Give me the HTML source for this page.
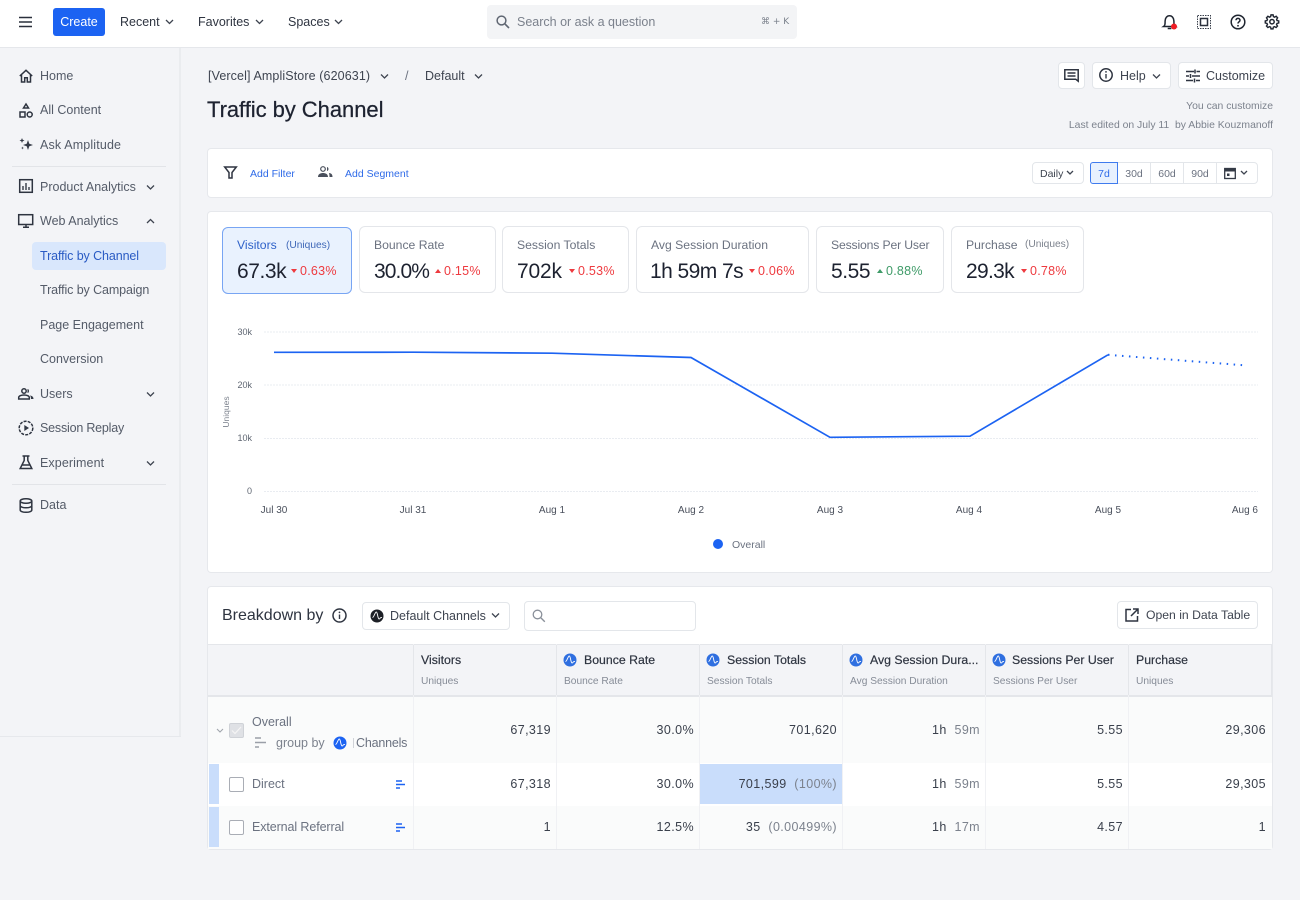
<!DOCTYPE html>
<html><head><meta charset="utf-8"><title>Traffic by Channel</title>
<style>
*{box-sizing:border-box}
html,body{margin:0;padding:0}
body{width:1300px;height:900px;position:relative;overflow:hidden;background:#f3f4f7;font-family:"Liberation Sans",sans-serif;color:#3e4450;font-size:12.5px}
.a,.t{position:absolute}
.t{white-space:nowrap;line-height:16px}
.r{text-align:right}
.c{text-align:center}
.card{position:absolute;background:#fff;border:1px solid #e6e8ec;border-radius:4px}
.btn{position:absolute;background:#fff;border:1px solid #e3e6ea;border-radius:4px}
svg{position:absolute;overflow:visible}
.ic{fill:none;stroke:#2e3440;stroke-width:1.5}
.ch{fill:none;stroke:#3e4450;stroke-width:1.3}
.nav{color:#545b68;font-size:12.5px}
.kt{color:#6b7280;font-size:12.2px}
.kv{color:#1d2230;font-size:21px;line-height:26px;letter-spacing:-.45px;margin-top:1px}
.kd{font-size:12.5px;letter-spacing:.25px}
.red{color:#ee3a3f}.grn{color:#3f9b68}
.th{font-weight:400;color:#2e3440;font-size:12.3px;-webkit-text-stroke:.2px #2e3440}
.sub{color:#868c97;font-size:10.2px;margin-top:1px}
.n{color:#3a404c;font-size:12.5px;text-align:right;letter-spacing:.4px}
.g{color:#7c828d}
</style></head><body>

<div class="a" style="left:0;top:0;width:1300px;height:48px;background:#fff;border-bottom:1px solid #e5e7eb"></div>
<svg style="left:18px;top:15px" width="15" height="14"><path d="M1 2.500h13M1 7h13M1 11.500h13" stroke="#2a303c" stroke-width="1.500" fill="none"/></svg>
<div class="a" style="left:53px;top:8px;width:52px;height:28px;background:#1c63f2;border-radius:3px"></div>
<div class="t c" style="left:53px;top:14px;width:52px;color:#fff;font-size:12.5px">Create</div>
<div class="t" style="left:120px;top:14px;color:#2f3541">Recent</div>
<svg style="left:164px;top:18px" width="10" height="7"><path class="ch" d="M2 2l3.500 3.500L9 2"/></svg>
<div class="t" style="left:198px;top:14px;color:#2f3541">Favorites</div>
<svg style="left:254px;top:18px" width="10" height="7"><path class="ch" d="M2 2l3.500 3.500L9 2"/></svg>
<div class="t" style="left:288px;top:14px;color:#2f3541">Spaces</div>
<svg style="left:333px;top:18px" width="10" height="7"><path class="ch" d="M2 2l3.500 3.500L9 2"/></svg>
<div class="a" style="left:487px;top:5px;width:310px;height:34px;background:#f3f4f6;border-radius:4px"></div>
<svg style="left:496px;top:15px" width="14" height="14"><circle cx="5.500" cy="5.500" r="4.400" fill="none" stroke="#5f6672" stroke-width="1.500"/><path d="M9 9l4 4" stroke="#5f6672" stroke-width="1.600"/></svg>
<div class="t" style="left:517px;top:14px;color:#7b818c">Search or ask a question</div>
<div class="t" style="left:761px;top:14px;color:#7b818c;font-size:9px;font-family:'DejaVu Sans',sans-serif">⌘ + K</div>

<svg style="left:1163px;top:15px" width="16" height="16"><path d="M.6 11.500c1.500-1 1.500-2.500 1.500-5.500C2.100 3 4 .8 6.500.8S10.900 3 10.900 6c0 3 0 4.500 1.500 5.500z M4.700 13.500h3.600" class="ic" style="stroke:#1f2530"/><circle cx="11" cy="11.500" r="3" fill="#ee1c25"/></svg>
<svg style="left:1197px;top:15px" width="14" height="14"><rect x=".5" y=".5" width="13" height="13" fill="none" stroke="#3a404c" stroke-dasharray="1.500 1"/><rect x="3.500" y="3.500" width="7" height="7" fill="none" stroke="#2a303c" stroke-width="1.500"/></svg>
<svg style="left:1230px;top:14px" width="16" height="16"><circle cx="8" cy="8" r="6.800" class="ic" style="stroke:#1f2530"/><path d="M6 6.200C6 3.800 10 3.800 10 6.200c0 1.600-2 1.600-2 3.300" class="ic" style="stroke:#1f2530"/><circle cx="8" cy="11.800" r=".9" fill="#1f2530"/></svg>
<svg style="left:1265px;top:14px" width="15" height="15"><path d="M6.800 1h2.400l.4 2 1.300.6 1.800-1 1.600 1.800-1.100 1.700.4 1.300 2 .5v2.300l-2 .5-.5 1.300 1.100 1.700-1.600 1.700-1.800-1-1.300.5-.4 2H6.800l-.4-2-1.300-.5-1.800 1-1.600-1.700 1.100-1.700-.5-1.300-2-.5V7.900l2-.5.5-1.300L1.700 4.400l1.600-1.800 1.800 1 1.300-.6z" transform="scale(.88)" class="ic" style="stroke:#1f2530;stroke-width:1.600"/><circle cx="7" cy="7.700" r="2.200" class="ic" style="stroke:#1f2530"/></svg>

<!-- sidebar -->
<div class="a" style="left:179px;top:48px;width:2px;height:689px;background:#eaecef"></div>
<div class="a" style="left:0;top:736px;width:181px;height:1px;background:#e6e8ec"></div>
<div class="a" style="left:12px;top:166px;width:154px;height:1px;background:#e2e4e8"></div>
<div class="a" style="left:12px;top:484px;width:154px;height:1px;background:#e2e4e8"></div>
<div class="a" style="left:32px;top:242px;width:134px;height:28px;background:#d9e7fc;border-radius:4px"></div>

<svg style="left:19px;top:69px" width="14" height="14"><path class="ic" d="M.8 7L7 1.300 13.200 7M2.500 5.500v7.500h3.200V8.800h2.600V13h3.200V5.500"/></svg>
<div class="t nav" style="left:40px;top:68px">Home</div>
<svg style="left:19px;top:103px" width="14" height="15"><path class="ic" d="M7 1l2.500 4h-5z"/><rect class="ic" x="1" y="9" width="5" height="5"/><circle class="ic" cx="10.700" cy="11.500" r="2.500"/></svg>
<div class="t nav" style="left:40px;top:102px">All Content</div>
<svg style="left:19px;top:137px" width="14" height="14"><path fill="#343a46" d="M9 3l1.300 3.700L14 8l-3.700 1.300L9 13 7.700 9.300 4 8l3.700-1.300zM3 1l.7 1.800L5.500 3.500l-1.800.7L3 6l-.7-1.800L.5 3.500l1.800-.7zM3.500 9.500l.4 1.100 1.100.4-1.100.4-.4 1.100-.4-1.100L2 11l1.100-.4z"/></svg>
<div class="t nav" style="left:40px;top:137px;letter-spacing:.15px">Ask Amplitude</div>
<svg style="left:19px;top:179px" width="14" height="14"><rect class="ic" x=".7" y=".7" width="12.600" height="12.600"/><path d="M4 11V7M7 11V4M10 11V8" stroke="#343a46" stroke-width="1.400"/></svg>
<div class="t nav" style="left:40px;top:179px">Product Analytics</div>
<svg style="left:145px;top:184px" width="10" height="7"><path class="ch" d="M2 1.500l3.500 3.500L9 1.500"/></svg>
<svg style="left:18px;top:214px" width="16" height="14"><rect class="ic" x=".7" y=".7" width="14" height="9.800"/><path d="M8 10.500V13M5 13.300h6" class="ic"/></svg>
<div class="t nav" style="left:40px;top:213px">Web Analytics</div>
<svg style="left:145px;top:218px" width="10" height="7"><path class="ch" d="M2 5l3.500-3.500L9 5"/></svg>
<div class="t" style="left:40px;top:248px;color:#2a5bc4;letter-spacing:-.1px">Traffic by Channel</div>
<div class="t nav" style="left:40px;top:282px;letter-spacing:-.1px">Traffic by Campaign</div>
<div class="t nav" style="left:40px;top:317px">Page Engagement</div>
<div class="t nav" style="left:40px;top:351px">Conversion</div>
<svg style="left:18px;top:388px" width="16" height="12"><circle class="ic" cx="6" cy="3" r="2.200"/><path class="ic" d="M.7 11V9.500C.7 8 3 7 6 7s5.300 1 5.300 2.500V11z"/><path fill="#343a46" d="M9.500 1c2 0 2 4 0 4zM12 7.500c2 .3 3.500 1.200 3.500 3.500H13c0-1.500-.3-2.600-1-3.500z"/></svg>
<div class="t nav" style="left:40px;top:386px">Users</div>
<svg style="left:145px;top:391px" width="10" height="7"><path class="ch" d="M2 1.500l3.500 3.500L9 1.500"/></svg>
<svg style="left:18px;top:420px" width="16" height="16"><circle class="ic" cx="8" cy="8" r="6.800" stroke-dasharray="3 1.200"/><path d="M6.300 5v6L11 8z" fill="#343a46"/></svg>
<div class="t nav" style="left:40px;top:420px;letter-spacing:-.2px">Session Replay</div>
<svg style="left:19px;top:455px" width="14" height="15"><path class="ic" d="M3.500 1h7M5.200 1v4.500L1.200 13.500h11.600l-4-8V1M3.500 10h7"/></svg>
<div class="t nav" style="left:40px;top:455px;letter-spacing:.1px">Experiment</div>
<svg style="left:145px;top:460px" width="10" height="7"><path class="ch" d="M2 1.500l3.500 3.500L9 1.500"/></svg>
<svg style="left:19px;top:498px" width="14" height="15"><ellipse class="ic" cx="7" cy="3" rx="5.800" ry="2.300"/><path class="ic" d="M1.200 3v9c0 1.300 2.600 2.300 5.800 2.300s5.800-1 5.800-2.300V3M1.200 7.500c0 1.300 2.600 2.300 5.800 2.300s5.800-1 5.800-2.300"/></svg>
<div class="t nav" style="left:40px;top:497px">Data</div>

<!-- header -->
<div class="t" style="left:208px;top:68px;color:#3e4450;letter-spacing:.11px">[Vercel] AmpliStore (620631)</div>
<svg style="left:379px;top:73px" width="10" height="7"><path class="ch" d="M2 1.500l3.500 3.500L9 1.500"/></svg>
<div class="t" style="left:405px;top:68px;color:#6b7280">/</div>
<div class="t" style="left:425px;top:68px;color:#3e4450">Default</div>
<svg style="left:473px;top:73px" width="10" height="7"><path class="ch" d="M2 1.500l3.500 3.500L9 1.500"/></svg>
<div class="t" style="left:207px;top:97px;font-size:22px;line-height:26px;color:#1d2230;-webkit-text-stroke:.25px #1d2230;letter-spacing:-.05px">Traffic by Channel</div>

<div class="btn" style="left:1058px;top:62px;width:27px;height:27px"></div>
<svg style="left:1064px;top:69px" width="15" height="14"><path class="ic" d="M.8.800h13.400v11.400l-2.500-2H.8zM3.500 4h8M3.500 7h8"/></svg>
<div class="btn" style="left:1092px;top:62px;width:79px;height:27px"></div>
<svg style="left:1099px;top:68px" width="14" height="14"><circle class="ic" cx="7" cy="7" r="6.200"/><path d="M7 6v4.500" stroke="#343a46" stroke-width="1.400"/><circle cx="7" cy="3.900" r=".9" fill="#343a46"/></svg>
<div class="t" style="left:1120px;top:68px;color:#3e4450">Help</div>
<svg style="left:1151px;top:73px" width="10" height="7"><path class="ch" d="M2 1.500l3.500 3.500L9 1.500"/></svg>
<div class="btn" style="left:1178px;top:62px;width:95px;height:27px"></div>
<svg style="left:1186px;top:69px" width="14" height="14"><path class="ic" d="M0 2.500h8M10.500 2.500H14M0 7h3M6 7h8M0 11.500h7M10 11.500h4M9 .5v4M4.500 5v4M8.500 9.500v4"/></svg>
<div class="t" style="left:1206px;top:68px;color:#3e4450">Customize</div>
<div class="t r" style="right:27px;top:99px;color:#7c828d;font-size:10.4px">You can customize</div>
<div class="t r" style="right:27px;top:118px;color:#7c828d;font-size:10.4px">Last edited on July 11&nbsp; by Abbie Kouzmanoff</div>

<!-- filter bar -->
<div class="card" style="left:207px;top:148px;width:1066px;height:50px"></div>
<svg style="left:224px;top:166px" width="13" height="13"><path class="ic" d="M.7 1h11.600L8 6.500V12H5V6.500z"/></svg>
<div class="t" style="left:250px;top:166px;color:#2f6be8;font-size:10.5px">Add Filter</div>
<svg style="left:318px;top:166px" width="15" height="13"><circle cx="5" cy="3" r="2.300" fill="none" stroke="#4a505c" stroke-width="1.200"/><path fill="#4a505c" d="M0 11c0-3 2.500-4 5-4s5 1 5 4zM9 1c2 .3 2 3.700 0 4zM11 7c2.500.3 3.500 1.500 3.500 4H11.500c0-1.500-.2-3-.5-4z"/></svg>
<div class="t" style="left:345px;top:166px;color:#2f6be8;font-size:10.5px">Add Segment</div>

<div class="btn" style="left:1032px;top:162px;width:52px;height:22px"></div>
<div class="t" style="left:1040px;top:166px;font-size:10.5px;color:#3e4450">Daily</div>
<svg style="left:1066px;top:170px" width="8" height="6"><path class="ch" d="M1 1l3 3 3-3"/></svg>
<div class="btn" style="left:1090px;top:162px;width:168px;height:22px"></div>
<div class="a" style="left:1090px;top:162px;width:28px;height:22px;background:#e8f1fe;border:1px solid #3f7bee;border-radius:3px 0 0 3px"></div>
<div class="a" style="left:1150px;top:163px;width:1px;height:20px;background:#e3e6ea"></div>
<div class="a" style="left:1183px;top:163px;width:1px;height:20px;background:#e3e6ea"></div>
<div class="a" style="left:1216px;top:163px;width:1px;height:20px;background:#e3e6ea"></div>
<div class="t c" style="left:1090px;top:165px;width:28px;font-size:10.5px;color:#2f6be8;margin-top:1px">7d</div>
<div class="t c" style="left:1118px;top:165px;width:32px;font-size:10.5px;color:#6b7280;margin-top:1px">30d</div>
<div class="t c" style="left:1151px;top:165px;width:32px;font-size:10.5px;color:#6b7280;margin-top:1px">60d</div>
<div class="t c" style="left:1184px;top:165px;width:32px;font-size:10.5px;color:#6b7280;margin-top:1px">90d</div>
<svg style="left:1224px;top:167px" width="12" height="12"><rect x=".7" y="1.500" width="10.600" height="10" fill="none" stroke="#343a46" stroke-width="1.300"/><rect x=".7" y="1.500" width="10.600" height="3" fill="#343a46"/><rect x="3" y="6.500" width="2.500" height="2.500" fill="#343a46"/></svg>
<svg style="left:1240px;top:170px" width="8" height="6"><path class="ch" d="M1 1l3 3 3-3"/></svg>

<!-- chart card -->
<div class="card" style="left:207px;top:211px;width:1066px;height:362px"></div>
<div class="a" style="left:222px;top:227px;width:130px;height:67px;background:#e9f2fe;border:1px solid #78a5f3;border-radius:6px"></div>
<div class="t" style="left:237px;top:237px;color:#2f62c9;font-size:12.2px">Visitors</div>
<div class="t" style="left:286px;top:238px;color:#3f68b8;font-size:10.2px">(Uniques)</div>
<div class="t kv" style="left:237px;top:258px">67.3k</div>
<svg style="left:291px;top:269px" width="6" height="4"><path d="M0 0h6L3 4z" fill="#ee3a3f"/></svg>
<div class="t kd red" style="left:300px;top:263px">0.63%</div>

<div class="a" style="left:359px;top:226px;width:137px;height:67px;background:#fff;border:1px solid #e4e6ea;border-radius:6px"></div>
<div class="t kt" style="left:374px;top:237px">Bounce Rate</div>
<div class="t kv" style="left:374px;top:258px;letter-spacing:-.9px">30.0%</div>
<svg style="left:435px;top:269px" width="6" height="4"><path d="M0 4h6L3 0z" fill="#ee3a3f"/></svg>
<div class="t kd red" style="left:444px;top:263px">0.15%</div>

<div class="a" style="left:502px;top:226px;width:127px;height:67px;background:#fff;border:1px solid #e4e6ea;border-radius:6px"></div>
<div class="t kt" style="left:517px;top:237px">Session Totals</div>
<div class="t kv" style="left:517px;top:258px;letter-spacing:-.2px">702k</div>
<svg style="left:569px;top:269px" width="6" height="4"><path d="M0 0h6L3 4z" fill="#ee3a3f"/></svg>
<div class="t kd red" style="left:578px;top:263px">0.53%</div>

<div class="a" style="left:636px;top:226px;width:173px;height:67px;background:#fff;border:1px solid #e4e6ea;border-radius:6px"></div>
<div class="t kt" style="left:651px;top:237px">Avg Session Duration</div>
<div class="t kv" style="left:650px;top:258px;letter-spacing:-.55px">1h 59m 7s</div>
<svg style="left:749px;top:269px" width="6" height="4"><path d="M0 0h6L3 4z" fill="#ee3a3f"/></svg>
<div class="t kd red" style="left:758px;top:263px">0.06%</div>

<div class="a" style="left:816px;top:226px;width:128px;height:67px;background:#fff;border:1px solid #e4e6ea;border-radius:6px"></div>
<div class="t kt" style="left:831px;top:237px;letter-spacing:-.15px">Sessions Per User</div>
<div class="t kv" style="left:831px;top:258px">5.55</div>
<svg style="left:877px;top:269px" width="6" height="4"><path d="M0 4h6L3 0z" fill="#3f9b68"/></svg>
<div class="t kd grn" style="left:886px;top:263px">0.88%</div>

<div class="a" style="left:951px;top:226px;width:133px;height:67px;background:#fff;border:1px solid #e4e6ea;border-radius:6px"></div>
<div class="t kt" style="left:966px;top:237px">Purchase</div>
<div class="t" style="left:1025px;top:237px;color:#7c828d;font-size:10.2px">(Uniques)</div>
<div class="t kv" style="left:966px;top:258px;letter-spacing:-.7px">29.3k</div>
<svg style="left:1021px;top:269px" width="6" height="4"><path d="M0 0h6L3 4z" fill="#ee3a3f"/></svg>
<div class="t kd red" style="left:1030px;top:263px">0.78%</div>

<svg style="left:0;top:0" width="1300" height="900">
<g stroke="#e9ecf1" stroke-width="1" stroke-dasharray="2 1"><path d="M264 332H1258M264 385H1258M264 438.500H1258M264 491.500H1258"/></g>
<polyline fill="none" stroke="#1c63f2" stroke-width="1.700" points="274,352.300 413,352.200 552,353.200 691,357.500 830,437.300 970,436.200 1108,354.800"/>
<polyline fill="none" stroke="#1c63f2" stroke-width="2" stroke-dasharray="1.500 5.500" points="1108,354.800 1247,365.500"/>
<circle cx="718" cy="544" r="5" fill="#1c63f2"/>
</svg>
<div class="t r" style="left:222px;top:324px;width:30px;font-size:9px;color:#5f6672">30k</div>
<div class="t r" style="left:222px;top:377px;width:30px;font-size:9px;color:#5f6672">20k</div>
<div class="t r" style="left:222px;top:430px;width:30px;font-size:9px;color:#5f6672">10k</div>
<div class="t r" style="left:222px;top:483px;width:30px;font-size:9px;color:#5f6672">0</div>
<div class="t" style="left:226px;top:412px;font-size:8.5px;color:#7c828d;transform:translate(-50%,-50%) rotate(-90deg)">Uniques</div>
<div class="t c" style="left:244px;top:503px;width:60px;font-size:10px;color:#4a505c">Jul 30</div>
<div class="t c" style="left:383px;top:503px;width:60px;font-size:10px;color:#4a505c">Jul 31</div>
<div class="t c" style="left:522px;top:503px;width:60px;font-size:10px;color:#4a505c">Aug 1</div>
<div class="t c" style="left:661px;top:503px;width:60px;font-size:10px;color:#4a505c">Aug 2</div>
<div class="t c" style="left:800px;top:503px;width:60px;font-size:10px;color:#4a505c">Aug 3</div>
<div class="t c" style="left:939px;top:503px;width:60px;font-size:10px;color:#4a505c">Aug 4</div>
<div class="t c" style="left:1078px;top:503px;width:60px;font-size:10px;color:#4a505c">Aug 5</div>
<div class="t r" style="left:1198px;top:503px;width:60px;font-size:10px;color:#4a505c">Aug 6</div>
<div class="t" style="left:732px;top:537px;font-size:10.5px;color:#6b7280">Overall</div>

<!-- breakdown card -->
<div class="card" style="left:207px;top:586px;width:1066px;height:264px"></div>
<div class="t" style="left:222px;top:606px;font-size:16px;line-height:20px;color:#2e3440">Breakdown by</div>
<svg style="left:332px;top:608px" width="15" height="15"><circle class="ic" cx="7.500" cy="7.500" r="6.500"/><path d="M7.500 6.500v4.500" stroke="#343a46" stroke-width="1.400"/><circle cx="7.500" cy="4.400" r=".9" fill="#343a46"/></svg>
<div class="btn" style="left:362px;top:602px;width:148px;height:28px"></div>
<svg style="left:370px;top:609px" width="14" height="14"><circle cx="7" cy="7" r="6.500" fill="#1d2026"/><path d="M2.500 8.500C4 8.500 5 3 6.300 3S7.500 9 9 10c1 .3 1-2 3-1.500" fill="none" stroke="#fff" stroke-width=".9"/></svg>
<div class="t" style="left:390px;top:608px;color:#3e4450">Default Channels</div>
<svg style="left:490px;top:612px" width="10" height="7"><path class="ch" d="M2 1.500l3.500 3.500L9 1.500"/></svg>
<div class="btn" style="left:524px;top:601px;width:172px;height:30px"></div>
<svg style="left:532px;top:609px" width="14" height="14"><circle cx="5.500" cy="5.500" r="4.300" fill="none" stroke="#8a909a" stroke-width="1.300"/><path d="M8.800 8.800l4 4" stroke="#8a909a" stroke-width="1.400"/></svg>
<div class="btn" style="left:1117px;top:601px;width:141px;height:28px"></div>
<svg style="left:1125px;top:608px" width="14" height="14"><path class="ic" d="M6 1.500H1v11.500h11.500V8M8 1h5v5M13 1L6 8"/></svg>
<div class="t" style="left:1146px;top:607px;color:#3e4450;font-size:12.2px">Open in Data Table</div>

<!-- table -->
<div class="a" style="left:208px;top:644px;width:1064px;height:53px;background:#f3f4f7;border-top:1px solid #e4e6ea;border-bottom:2px solid #e4e6ea"></div>
<div class="a" style="left:208px;top:697px;width:1064px;height:66px;background:#fafbfb"></div>
<div class="a" style="left:208px;top:763px;width:1064px;height:43px;background:#fff"></div>
<div class="a" style="left:208px;top:806px;width:1064px;height:43px;background:#fafbfb"></div>
<div class="a" style="left:209px;top:764px;width:10px;height:40px;background:#c9ddfb"></div>
<div class="a" style="left:209px;top:807px;width:10px;height:40px;background:#c9ddfb"></div>
<div class="a" style="left:700px;top:764px;width:142px;height:40px;background:#c9ddfb"></div>

<div class="a" style="left:413px;top:644px;width:1px;height:205px;background:#f0f1f4"></div>
<div class="a" style="left:556px;top:644px;width:1px;height:205px;background:#f0f1f4"></div>
<div class="a" style="left:699px;top:644px;width:1px;height:205px;background:#f0f1f4"></div>
<div class="a" style="left:842px;top:644px;width:1px;height:205px;background:#f0f1f4"></div>
<div class="a" style="left:985px;top:644px;width:1px;height:205px;background:#f0f1f4"></div>
<div class="a" style="left:1128px;top:644px;width:1px;height:205px;background:#f0f1f4"></div>
<div class="a" style="left:413px;top:645px;width:1px;height:50px;background:#e4e6ea"></div>
<div class="a" style="left:556px;top:645px;width:1px;height:50px;background:#e4e6ea"></div>
<div class="a" style="left:699px;top:645px;width:1px;height:50px;background:#e4e6ea"></div>
<div class="a" style="left:842px;top:645px;width:1px;height:50px;background:#e4e6ea"></div>
<div class="a" style="left:985px;top:645px;width:1px;height:50px;background:#e4e6ea"></div>
<div class="a" style="left:1128px;top:645px;width:1px;height:50px;background:#e4e6ea"></div>
<div class="a" style="left:1271px;top:644px;width:1px;height:53px;background:#e4e6ea"></div>

<div class="t th" style="left:421px;top:652px">Visitors</div>
<div class="t sub" style="left:421px;top:673px">Uniques</div>
<svg style="left:563px;top:653px" width="14" height="14"><circle cx="7" cy="7" r="6.500" fill="#2f6fe0"/><path d="M2.500 8.500C4 8.500 5 3 6.300 3S7.500 9 9 10c1 .3 1-2 3-1.500" fill="none" stroke="#fff" stroke-width=".9"/></svg>
<div class="t th" style="left:584px;top:652px">Bounce Rate</div>
<div class="t sub" style="left:564px;top:673px">Bounce Rate</div>
<svg style="left:706px;top:653px" width="14" height="14"><circle cx="7" cy="7" r="6.500" fill="#2f6fe0"/><path d="M2.500 8.500C4 8.500 5 3 6.300 3S7.500 9 9 10c1 .3 1-2 3-1.500" fill="none" stroke="#fff" stroke-width=".9"/></svg>
<div class="t th" style="left:727px;top:652px">Session Totals</div>
<div class="t sub" style="left:707px;top:673px">Session Totals</div>
<svg style="left:849px;top:653px" width="14" height="14"><circle cx="7" cy="7" r="6.500" fill="#2f6fe0"/><path d="M2.500 8.500C4 8.500 5 3 6.300 3S7.500 9 9 10c1 .3 1-2 3-1.500" fill="none" stroke="#fff" stroke-width=".9"/></svg>
<div class="t th" style="left:870px;top:652px">Avg Session Dura...</div>
<div class="t sub" style="left:850px;top:673px">Avg Session Duration</div>
<svg style="left:992px;top:653px" width="14" height="14"><circle cx="7" cy="7" r="6.500" fill="#2f6fe0"/><path d="M2.500 8.500C4 8.500 5 3 6.300 3S7.500 9 9 10c1 .3 1-2 3-1.500" fill="none" stroke="#fff" stroke-width=".9"/></svg>
<div class="t th" style="left:1012px;top:652px">Sessions Per User</div>
<div class="t sub" style="left:993px;top:673px">Sessions Per User</div>
<div class="t th" style="left:1136px;top:652px">Purchase</div>
<div class="t sub" style="left:1136px;top:673px">Uniques</div>

<!-- row labels -->
<svg style="left:216px;top:728px" width="8" height="6"><path d="M1 1l3 3 3-3" fill="none" stroke="#a0a5ad" stroke-width="1.100"/></svg>
<div class="a" style="left:229px;top:723px;width:15px;height:15px;background:#dfe1e5;border:1px solid #cfd2d7;border-radius:2px"></div>
<svg style="left:231px;top:726px" width="11" height="9"><path d="M1 4.500l3 3 6-6.500" fill="none" stroke="#f5f5f5" stroke-width="1.200"/></svg>
<div class="t" style="left:252px;top:714px;color:#6b7280">Overall</div>
<svg style="left:255px;top:737px" width="12" height="12"><path d="M0 1h6M0 5.500h11M0 10h4" stroke="#9a9fa8" stroke-width="1.600" fill="none"/></svg>
<div class="t" style="left:276px;top:735px;color:#7c828d">group by</div>
<svg style="left:333px;top:736px" width="14" height="14"><circle cx="7" cy="7" r="6.500" fill="#1c63f2"/><path d="M2.500 8.500C4 8.500 5 3 6.300 3S7.500 9 9 10c1 .3 1-2 3-1.500" fill="none" stroke="#fff" stroke-width=".9"/></svg>
<div class="a" style="left:353px;top:738px;width:1px;height:10px;background:#d0d3d8"></div>
<div class="t" style="left:356px;top:735px;color:#6b7280;letter-spacing:-.2px">Channels</div>

<div class="a" style="left:229px;top:777px;width:15px;height:15px;background:#fff;border:1px solid #a9adb5;border-radius:2px"></div>
<div class="t" style="left:252px;top:776px;color:#6b7280">Direct</div>
<svg style="left:396px;top:780px" width="10" height="9"><path d="M0 1h6M0 4.500h9M0 8h4" stroke="#1c63f2" stroke-width="1.500" fill="none"/></svg>
<div class="a" style="left:229px;top:820px;width:15px;height:15px;background:#fff;border:1px solid #a9adb5;border-radius:2px"></div>
<div class="t" style="left:252px;top:819px;color:#6b7280;letter-spacing:-.1px">External Referral</div>
<svg style="left:396px;top:823px" width="10" height="9"><path d="M0 1h6M0 4.500h9M0 8h4" stroke="#1c63f2" stroke-width="1.500" fill="none"/></svg>

<!-- data rows -->
<div class="t n" style="left:414px;top:722px;width:137px">67,319</div>
<div class="t n" style="left:557px;top:722px;width:137px">30.0%</div>
<div class="t n" style="left:700px;top:722px;width:137px">701,620</div>
<div class="t n" style="left:843px;top:722px;width:137px">1h &nbsp;<span class="g">59m</span></div>
<div class="t n" style="left:986px;top:722px;width:137px">5.55</div>
<div class="t n" style="left:1129px;top:722px;width:137px">29,306</div>

<div class="t n" style="left:414px;top:776px;width:137px">67,318</div>
<div class="t n" style="left:557px;top:776px;width:137px">30.0%</div>
<div class="t n" style="left:700px;top:776px;width:137px">701,599 &nbsp;<span class="g">(100%)</span></div>
<div class="t n" style="left:843px;top:776px;width:137px">1h &nbsp;<span class="g">59m</span></div>
<div class="t n" style="left:986px;top:776px;width:137px">5.55</div>
<div class="t n" style="left:1129px;top:776px;width:137px">29,305</div>

<div class="t n" style="left:414px;top:819px;width:137px">1</div>
<div class="t n" style="left:557px;top:819px;width:137px">12.5%</div>
<div class="t n" style="left:700px;top:819px;width:137px">35 &nbsp;<span class="g">(0.00499%)</span></div>
<div class="t n" style="left:843px;top:819px;width:137px">1h &nbsp;<span class="g">17m</span></div>
<div class="t n" style="left:986px;top:819px;width:137px">4.57</div>
<div class="t n" style="left:1129px;top:819px;width:137px">1</div>

</body></html>
